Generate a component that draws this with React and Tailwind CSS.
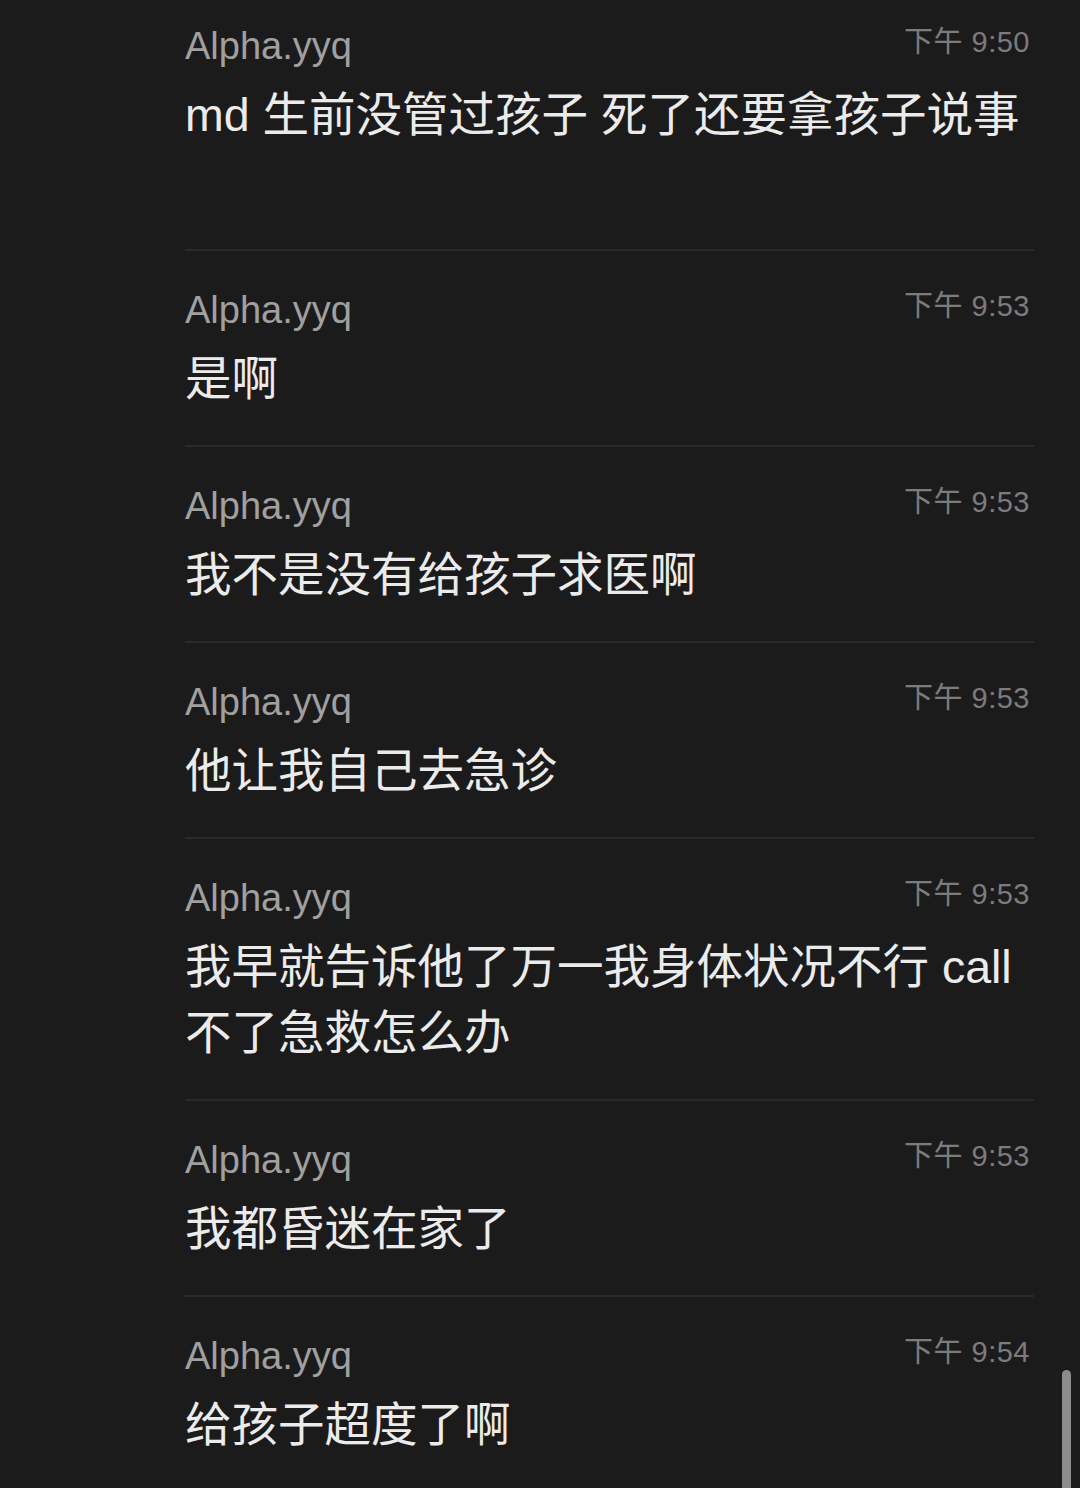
const messages = [
  { time: '下午 9:50', text: ['md 生前没管过孩子 死了还要拿孩子说事'] },
  { time: '下午 9:53', text: ['是啊'] },
  { time: '下午 9:53', text: ['我不是没有给孩子求医啊'] },
  { time: '下午 9:53', text: ['他让我自己去急诊'] },
  { time: '下午 9:53', text: ['我早就告诉他了万一我身体状况不行 call', '不了急救怎么办'] },
  { time: '下午 9:53', text: ['我都昏迷在家了'] },
  { time: '下午 9:54', text: ['给孩子超度了啊'] },
];

const Message = ({ msg, first, last }) => (
  <div
    className={`${first ? 'pt-[24px] pb-[101px]' : 'pt-[37px] pb-[33px]'} ${
      last ? '' : 'border-b-2 border-[#2a2a2a]'
    }`}
  >
    <div className="flex items-start justify-between pr-[4px]">
      <span className="text-[38px] leading-[44px] text-[#a0a0a0] font-['Liberation_Sans',sans-serif]">
        Alpha.yyq
      </span>
      <span className="mt-[1px] text-[29px] leading-[34px] tracking-[0.5px] text-[#7c7c7c] font-['Liberation_Sans','Noto_Sans_CJK_SC',sans-serif]">
        {msg.time}
      </span>
    </div>
    <div className="mt-[14px] text-[46.5px] leading-[66px] text-[#ebebeb] font-['Liberation_Sans','Noto_Sans_CJK_SC',sans-serif]">
      {msg.text.map((line, i) => (
        <div key={i} className="whitespace-nowrap">
          {line}
        </div>
      ))}
    </div>
  </div>
);

export default function App() {
  return (
    <div className="relative h-[1488px] w-[1080px] overflow-hidden bg-[#1b1b1b]">
      <div className="ml-[185px] w-[849px]">
        {messages.map((msg, i) => (
          <Message key={i} msg={msg} first={i === 0} last={i === messages.length - 1} />
        ))}
      </div>
      {/* scroll indicator */}
      <div className="absolute left-[1062px] top-[1370px] h-[130px] w-[9px] rounded-full bg-[#8c8c8c]" />
    </div>
  );
}
